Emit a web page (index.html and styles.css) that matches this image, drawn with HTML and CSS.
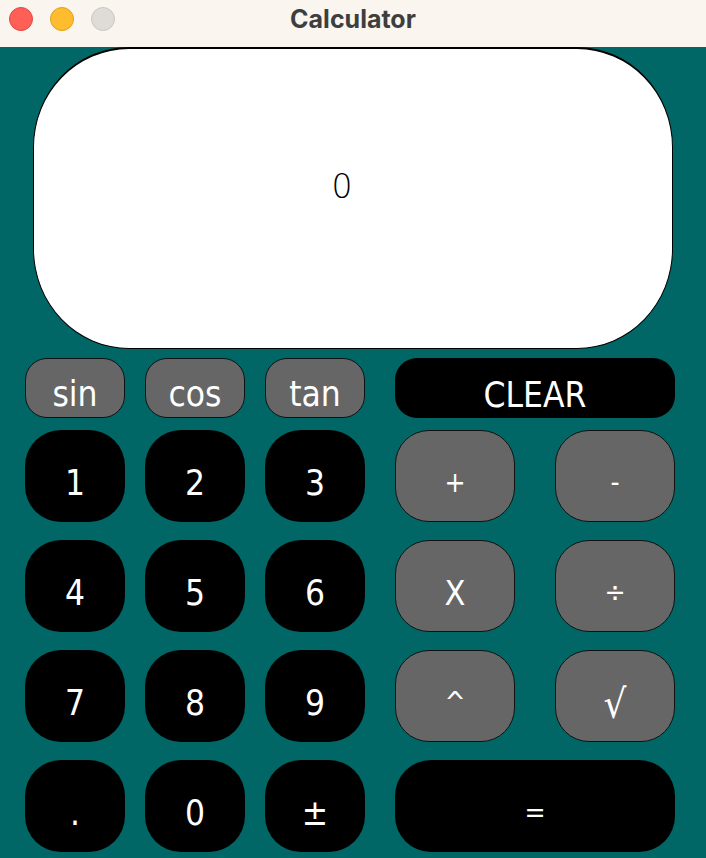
FILE: index.html
```html
<!DOCTYPE html>
<html lang="en">
<head>
<meta charset="utf-8">
<title>Calculator</title>
<link rel="stylesheet" href="styles.css">
</head>
<body>
<div class="window">
  <header class="titlebar">
    <div class="lights">
      <span class="light red"></span>
      <span class="light yellow"></span>
      <span class="light gray"></span>
    </div>
    <div class="title">Calculator</div>
  </header>
  <main class="calc">
    <div class="display"><span class="readout">0</span></div>
    <div class="pad">
      <div class="left">
        <div class="fn-row">
          <button class="key fn">sin</button>
          <button class="key fn">cos</button>
          <button class="key fn">tan</button>
        </div>
        <div class="digits">
          <button class="key num">1</button>
          <button class="key num">2</button>
          <button class="key num">3</button>
          <button class="key num">4</button>
          <button class="key num">5</button>
          <button class="key num">6</button>
          <button class="key num">7</button>
          <button class="key num">8</button>
          <button class="key num">9</button>
          <button class="key num">.</button>
          <button class="key num">0</button>
          <button class="key num">±</button>
        </div>
      </div>
      <div class="right">
        <button class="key clear">CLEAR</button>
        <div class="ops">
          <button class="key op">+</button>
          <button class="key op">-</button>
          <button class="key op big">X</button>
          <button class="key op">÷</button>
          <button class="key op">^</button>
          <button class="key op root">√</button>
          <button class="key equals">=</button>
        </div>
      </div>
    </div>
  </main>
</div>
</body>
</html>
```
FILE: styles.css
```css
* { box-sizing: border-box; }
html, body { margin: 0; padding: 0; }
body {
  width: 706px;
  height: 858px;
  overflow: hidden;
  background: #006666;
  font-family: "DejaVu Sans", "Noto Sans", sans-serif;
}
.titlebar {
  position: relative;
  height: 47px;
  background: #faf5ef;
  display: flex;
  align-items: center;
  justify-content: center;
  padding-bottom: 9px;
}
.lights {
  position: absolute;
  left: 9px;
  top: 7px;
  display: flex;
  gap: 17px;
}
.light {
  width: 24px;
  height: 24px;
  border-radius: 50%;
}
.light.red { background: #fe5f57; border: 1px solid #e2463f; }
.light.yellow { background: #febc2e; border: 1px solid #e1a116; }
.light.gray { background: #dfdbd6; border: 1px solid #cbc6c1; }
.title {
  font-family: Inter, "Liberation Sans", sans-serif;
  font-weight: 700;
  font-size: 25px;
  color: #3e3e3e;
}
.display {
  margin-left: 33px;
  width: 640px;
  height: 302px;
  background: #fff;
  border: 1px solid #000;
  border-top-width: 2px;
  border-radius: 96px / 100px;
  display: flex;
  align-items: center;
  justify-content: center;
  padding: 0 22px 24px 0;
}
.readout {
  font-size: 33px;
  font-weight: 300;
  font-stretch: condensed;
  color: #000;
}
.pad {
  margin-top: 9px;
  padding-left: 25px;
  display: flex;
  gap: 30px;
}
.left, .right {
  display: flex;
  flex-direction: column;
  gap: 12px;
}
.fn-row {
  display: flex;
  gap: 20px;
}
.digits {
  display: grid;
  grid-template-columns: repeat(3, 100px);
  grid-auto-rows: 92px;
  column-gap: 20px;
  row-gap: 18px;
}
.ops {
  display: grid;
  grid-template-columns: repeat(2, 120px);
  grid-auto-rows: 92px;
  column-gap: 40px;
  row-gap: 18px;
}
.key {
  margin: 0;
  border: 0;
  font-family: "DejaVu Sans", "Noto Sans", sans-serif;
  font-stretch: condensed;
  font-size: 35px;
  color: #fff;
  display: flex;
  align-items: center;
  justify-content: center;
  padding: 13px 0 0 0;
  line-height: normal;
}
.fn {
  width: 100px;
  height: 60px;
  border-radius: 22px;
  background: #666;
  border: 1px solid #111;
  padding-top: 12px;
}
.num {
  background: #000;
  border-radius: 36px;
}
.clear {
  width: 280px;
  height: 60px;
  background: #000;
  border-radius: 22px;
}
.op {
  background: #666;
  border: 1px solid #111;
  border-radius: 34px;
  font-size: 28px;
}
.op.big {
  font-size: 34px;
}
.op.root {
  font-size: 40px;
  padding-top: 16px;
}
.equals {
  grid-column: span 2;
  background: #000;
  border-radius: 36px;
  font-size: 28px;
}
```
